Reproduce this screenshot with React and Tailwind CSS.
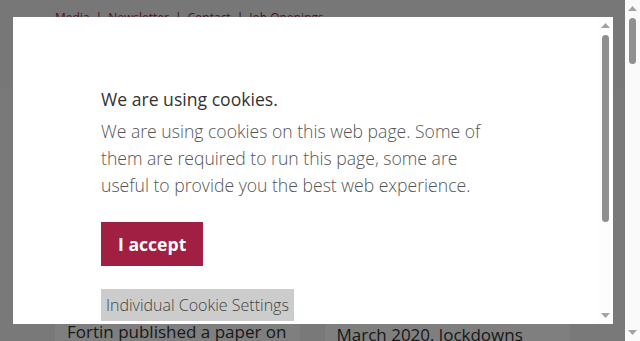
import React from "react";

function ScrollArrow({ down }) {
  return (
    <svg width="9" height="5" viewBox="0 0 9 5" className="mx-auto">
      <path d={down ? "M0 0h9L4.5 5z" : "M0 5h9L4.5 0z"} fill="#a3a3a3" />
    </svg>
  );
}

function Scrollbar({ thumbTop, thumbHeight, track }) {
  return (
    <div className={`flex w-[15px] shrink-0 flex-col ${track}`}>
      <div className="pt-[6px]">
        <ScrollArrow />
      </div>
      <div className="relative flex-1">
        <div
          className="absolute left-[4px] w-[7px] rounded-full bg-[#8f8f8f]"
          style={{ top: thumbTop, height: thumbHeight }}
        />
      </div>
      <div className="pb-[6px]">
        <ScrollArrow down />
      </div>
    </div>
  );
}

export default function App() {
  const links = ["Media", "Newsletter", "Contact", "Job Openings"];

  return (
    <div className="flex h-[341px] w-[640px] overflow-hidden font-['Open_Sans',sans-serif]">
      {/* page */}
      <div className="relative flex-1 overflow-hidden bg-[#f3f3f3]">
        <header className="h-[89px] bg-[#eeeeee] px-[55px] pt-[9px]">
          <nav className="flex items-center gap-[6px] text-[12px] text-[#a31f42]">
            {links.map((l, i) => (
              <React.Fragment key={l}>
                {i > 0 && <span className="text-[#5a1225]">|</span>}
                <span>{l}</span>
              </React.Fragment>
            ))}
          </nav>
        </header>
        <div className="flex gap-[25px] px-[55px] pt-[226px]">
          <div className="w-[245px] bg-white px-[12px] pt-[5px] text-[17px] leading-[24px] text-[#333]">
            Fortin published a paper on
          </div>
          <div className="w-[246px] bg-white px-[12px] pt-[8px] text-[17px] leading-[24px] text-[#333]">
            March 2020, lockdowns
          </div>
        </div>

        {/* overlay */}
        <div className="absolute inset-0 bg-black/50" />

        {/* cookie dialog */}
        <div className="absolute left-[13px] top-[17px] flex h-[307px] w-[600px] bg-white">
          <div className="flex-1 overflow-hidden pl-[88px] pt-[68px]">
            <h2 className="text-[17.6px] leading-[28px] text-[#333]">We are using cookies.</h2>
            <p className="mt-[5px] w-[395px] text-[17.6px] font-light leading-[27px] text-[#555]">
              We are using cookies on this web page. Some of them are required to run this page,
              some are useful to provide you the best web experience.
            </p>
            <button className="mt-[23px] block h-[44px] bg-[#a01f42] px-[17px] text-[17.6px] font-bold text-white">
              I accept
            </button>
            <button className="mt-[23px] block h-[32px] bg-[#cccccc] px-[5px] text-[16px] font-light text-[#444]">
              Individual Cookie Settings
            </button>
          </div>
          <Scrollbar thumbTop={7} thumbHeight={187} track="bg-[#fdfdfd]" />
        </div>
      </div>

      {/* page scrollbar */}
      <Scrollbar thumbTop={7} thumbHeight={46} track="bg-[#fafafa]" />
    </div>
  );
}
